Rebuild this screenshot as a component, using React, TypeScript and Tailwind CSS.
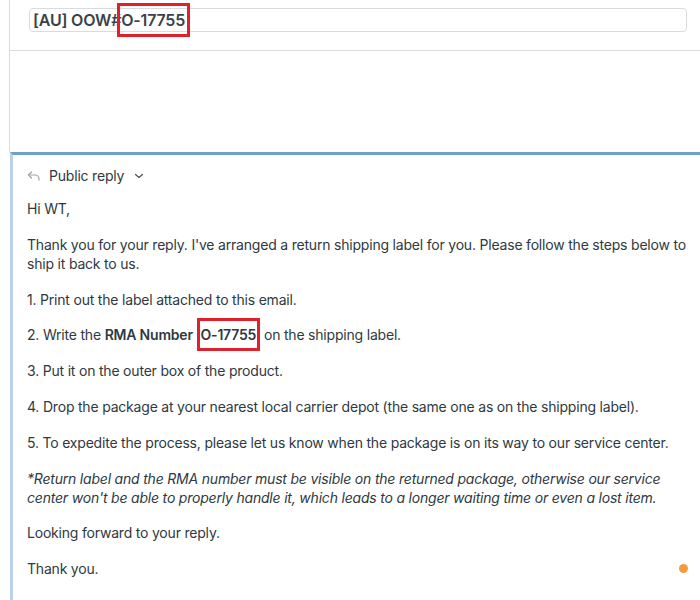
export default function App() {
  return (
    <div className="h-[600px] w-[700px] overflow-hidden bg-white text-[#2f3941]" style={{ fontFamily: "Inter, 'Noto Sans', sans-serif" }}>
      <div className="ml-[9px] h-[152px] border-l border-[#d8dcde]">
        <div className="h-[51px] border-b border-[#d8dcde] pl-[19px] pr-[13px] pt-[8px]">
          <div className="flex h-[24px] items-center rounded-[4px] border border-[#d8dcde] pl-[3px] tracking-[-0.2px]">
            <span className="text-[16px] font-semibold leading-none text-[#3b4249]">[AU] OOW#</span>
            <span className="relative text-[16px] font-semibold leading-none text-[#3b4249]">
              O-17755
              <span className="absolute -bottom-[9px] -left-[4px] -right-[5px] -top-[9px] border-[3px] border-[#e0202a]" />
            </span>
          </div>
        </div>
      </div>
      <div className="ml-[10px] h-[448px] border-l-[3px] border-t-[3px] border-l-[#b7d2ea] border-t-[#6f9fcb] pl-[14px] pr-[10px] text-[14px] leading-[19px] tracking-[-0.2px]">
        <div className="mt-[11px] flex items-center gap-[8px] text-[#2f3941]">
          <svg width="14" height="12" viewBox="0 0 14 12" fill="none" stroke="#9aa3ab" strokeWidth="1.2" strokeLinecap="round" strokeLinejoin="round">
            <path d="M4.5 2 L1.5 5 L4.5 8" />
            <path d="M1.5 5 H8 a4 4 0 0 1 4 4 v1" />
          </svg>
          <span>Public reply</span>
          <svg width="10" height="6" viewBox="0 0 10 6" fill="none" stroke="#4a535b" strokeWidth="1.2" strokeLinecap="round" strokeLinejoin="round" className="ml-[2px]">
            <path d="M1.5 1.5 L5 4.5 L8.5 1.5" />
          </svg>
        </div>
        <div className="mt-[14px] flex flex-col gap-[16.8px]">
          <p>Hi WT,</p>
          <p>Thank you for your reply. I've arranged a return shipping label for you. Please follow the steps below to ship it back to us.</p>
          <p>1. Print out the label attached to this email.</p>
          <p>
            2. Write the <b className="font-semibold">RMA Number</b>{" "}
            <span className="text-[#c2c8cc]">'</span>
            <span className="relative font-semibold">
              O-17755
              <span className="absolute -bottom-[8px] -left-[4px] -right-[4px] -top-[8px] border-[3px] border-[#e0202a]" />
            </span>
            <span className="text-[#c2c8cc]">'</span> on the shipping label.
          </p>
          <p>3. Put it on the outer box of the product.</p>
          <p>4. Drop the package at your nearest local carrier depot (the same one as on the shipping label).</p>
          <p>5. To expedite the process, please let us know when the package is on its way to our service center.</p>
          <p className="italic">*Return label and the RMA number must be visible on the returned package, otherwise our service center won't be able to properly handle it, which leads to a longer waiting time or even a lost item.</p>
          <p>Looking forward to your reply.</p>
          <div className="flex items-center justify-between">
            <p>Thank you.</p>
            <span className="mr-[2px] h-[9px] w-[9px] rounded-full bg-[#f79a3e]" />
          </div>
        </div>
      </div>
    </div>
  );
}
